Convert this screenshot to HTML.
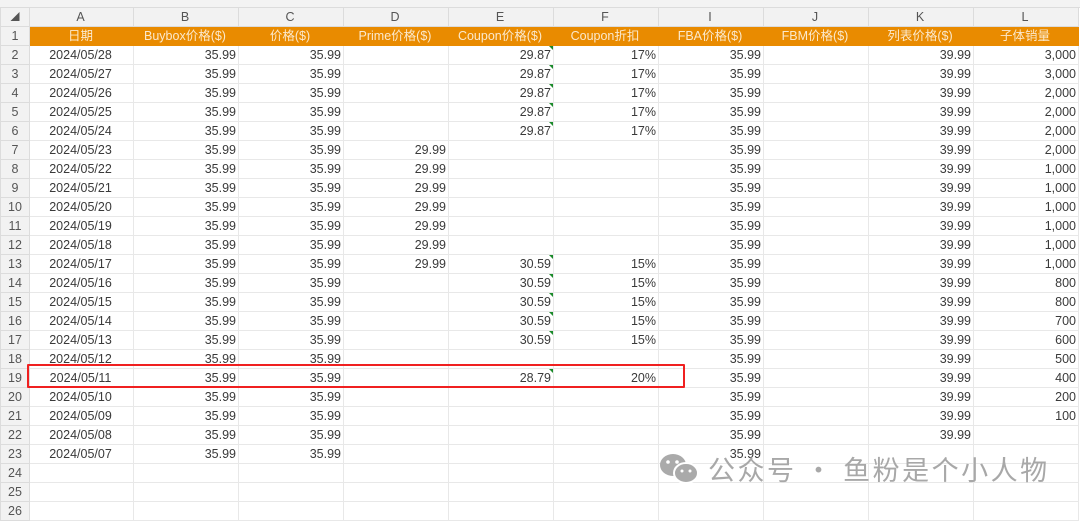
<!DOCTYPE html>
<html><head><meta charset="utf-8"><style>
body{margin:0;width:1080px;height:512px;overflow:hidden;background:#fff;font-family:"Liberation Sans","Noto Sans CJK SC",sans-serif;position:relative}
.top{position:absolute;left:0;top:0;width:1080px;height:7px;background:#f3f3f3;border-bottom:1px solid #ddd}
table{position:absolute;left:0;top:7px;border-collapse:collapse;table-layout:fixed;font-size:12.5px;color:#3a3a3a}
td{height:18px;border:1px solid #e8e8e8;padding:0 2px 0 0;text-align:right;white-space:nowrap;overflow:hidden;line-height:18px}
tr.h td{background:#f2f2f2;color:#555;text-align:center;height:17px;border-color:#dcdcdc}
td.n{background:#f2f2f2;color:#555;text-align:center;border-color:#dcdcdc;padding:0}
td.a{text-align:center}
tr.o td{background:#e98b00;color:#fbe9cc;text-align:center;border-color:#e98b00}
tr.o td.n{background:#f2f2f2;color:#555;border-color:#dcdcdc}
.g{position:relative}
.g:after{content:"";position:absolute;right:0;top:0;border-top:4px solid #1a8a2a;border-left:4px solid transparent}
.red{position:absolute;left:27px;top:364px;width:654px;height:20px;border:2px solid #f02020;border-radius:1px}
.wm{position:absolute;left:708px;top:449px;font-size:27px;color:#a8a8a8;font-family:"Noto Sans CJK SC",sans-serif;letter-spacing:2.5px}
</style></head><body>
<div class="top"></div>
<table>
<colgroup><col style="width:29px"><col style="width:104px"><col style="width:105px"><col style="width:105px"><col style="width:105px"><col style="width:105px"><col style="width:105px"><col style="width:105px"><col style="width:105px"><col style="width:105px"><col style="width:105px"></colgroup>
<tr class="h"><td class="n" style="font-size:9px">◢</td><td>A</td><td>B</td><td>C</td><td>D</td><td>E</td><td>F</td><td>I</td><td>J</td><td>K</td><td>L</td></tr>
<tr class="o"><td class="n">1</td><td>日期</td><td>Buybox价格($)</td><td>价格($)</td><td>Prime价格($)</td><td>Coupon价格($)</td><td>Coupon折扣</td><td>FBA价格($)</td><td>FBM价格($)</td><td>列表价格($)</td><td>子体销量</td></tr>
<tr><td class="n">2</td><td class="a">2024/05/28</td><td>35.99</td><td>35.99</td><td></td><td class="g">29.87</td><td>17%</td><td>35.99</td><td></td><td>39.99</td><td>3,000</td></tr>
<tr><td class="n">3</td><td class="a">2024/05/27</td><td>35.99</td><td>35.99</td><td></td><td class="g">29.87</td><td>17%</td><td>35.99</td><td></td><td>39.99</td><td>3,000</td></tr>
<tr><td class="n">4</td><td class="a">2024/05/26</td><td>35.99</td><td>35.99</td><td></td><td class="g">29.87</td><td>17%</td><td>35.99</td><td></td><td>39.99</td><td>2,000</td></tr>
<tr><td class="n">5</td><td class="a">2024/05/25</td><td>35.99</td><td>35.99</td><td></td><td class="g">29.87</td><td>17%</td><td>35.99</td><td></td><td>39.99</td><td>2,000</td></tr>
<tr><td class="n">6</td><td class="a">2024/05/24</td><td>35.99</td><td>35.99</td><td></td><td class="g">29.87</td><td>17%</td><td>35.99</td><td></td><td>39.99</td><td>2,000</td></tr>
<tr><td class="n">7</td><td class="a">2024/05/23</td><td>35.99</td><td>35.99</td><td>29.99</td><td></td><td></td><td>35.99</td><td></td><td>39.99</td><td>2,000</td></tr>
<tr><td class="n">8</td><td class="a">2024/05/22</td><td>35.99</td><td>35.99</td><td>29.99</td><td></td><td></td><td>35.99</td><td></td><td>39.99</td><td>1,000</td></tr>
<tr><td class="n">9</td><td class="a">2024/05/21</td><td>35.99</td><td>35.99</td><td>29.99</td><td></td><td></td><td>35.99</td><td></td><td>39.99</td><td>1,000</td></tr>
<tr><td class="n">10</td><td class="a">2024/05/20</td><td>35.99</td><td>35.99</td><td>29.99</td><td></td><td></td><td>35.99</td><td></td><td>39.99</td><td>1,000</td></tr>
<tr><td class="n">11</td><td class="a">2024/05/19</td><td>35.99</td><td>35.99</td><td>29.99</td><td></td><td></td><td>35.99</td><td></td><td>39.99</td><td>1,000</td></tr>
<tr><td class="n">12</td><td class="a">2024/05/18</td><td>35.99</td><td>35.99</td><td>29.99</td><td></td><td></td><td>35.99</td><td></td><td>39.99</td><td>1,000</td></tr>
<tr><td class="n">13</td><td class="a">2024/05/17</td><td>35.99</td><td>35.99</td><td>29.99</td><td class="g">30.59</td><td>15%</td><td>35.99</td><td></td><td>39.99</td><td>1,000</td></tr>
<tr><td class="n">14</td><td class="a">2024/05/16</td><td>35.99</td><td>35.99</td><td></td><td class="g">30.59</td><td>15%</td><td>35.99</td><td></td><td>39.99</td><td>800</td></tr>
<tr><td class="n">15</td><td class="a">2024/05/15</td><td>35.99</td><td>35.99</td><td></td><td class="g">30.59</td><td>15%</td><td>35.99</td><td></td><td>39.99</td><td>800</td></tr>
<tr><td class="n">16</td><td class="a">2024/05/14</td><td>35.99</td><td>35.99</td><td></td><td class="g">30.59</td><td>15%</td><td>35.99</td><td></td><td>39.99</td><td>700</td></tr>
<tr><td class="n">17</td><td class="a">2024/05/13</td><td>35.99</td><td>35.99</td><td></td><td class="g">30.59</td><td>15%</td><td>35.99</td><td></td><td>39.99</td><td>600</td></tr>
<tr><td class="n">18</td><td class="a">2024/05/12</td><td>35.99</td><td>35.99</td><td></td><td></td><td></td><td>35.99</td><td></td><td>39.99</td><td>500</td></tr>
<tr><td class="n">19</td><td class="a">2024/05/11</td><td>35.99</td><td>35.99</td><td></td><td class="g">28.79</td><td>20%</td><td>35.99</td><td></td><td>39.99</td><td>400</td></tr>
<tr><td class="n">20</td><td class="a">2024/05/10</td><td>35.99</td><td>35.99</td><td></td><td></td><td></td><td>35.99</td><td></td><td>39.99</td><td>200</td></tr>
<tr><td class="n">21</td><td class="a">2024/05/09</td><td>35.99</td><td>35.99</td><td></td><td></td><td></td><td>35.99</td><td></td><td>39.99</td><td>100</td></tr>
<tr><td class="n">22</td><td class="a">2024/05/08</td><td>35.99</td><td>35.99</td><td></td><td></td><td></td><td>35.99</td><td></td><td>39.99</td><td></td></tr>
<tr><td class="n">23</td><td class="a">2024/05/07</td><td>35.99</td><td>35.99</td><td></td><td></td><td></td><td>35.99</td><td></td><td></td><td></td></tr>
<tr><td class="n">24</td><td></td><td></td><td></td><td></td><td></td><td></td><td></td><td></td><td></td><td></td></tr>
<tr><td class="n">25</td><td></td><td></td><td></td><td></td><td></td><td></td><td></td><td></td><td></td><td></td></tr>
<tr><td class="n">26</td><td></td><td></td><td></td><td></td><td></td><td></td><td></td><td></td><td></td><td></td></tr>
</table>
<div class="red"></div>
<svg style="position:absolute;left:658px;top:452px" width="44" height="34" viewBox="0 0 44 34">
<ellipse cx="15" cy="13" rx="13" ry="11" fill="#aaa"/>
<ellipse cx="28" cy="21" rx="12" ry="10" fill="#aaa" stroke="#fff" stroke-width="2"/>
<circle cx="10" cy="10" r="1.8" fill="#fff"/><circle cx="19" cy="10" r="1.8" fill="#fff"/>
<circle cx="24" cy="19" r="1.5" fill="#fff"/><circle cx="32" cy="19" r="1.5" fill="#fff"/>
</svg>
<div class="wm">公众号 · 鱼粉是个小人物</div>
</body></html>
